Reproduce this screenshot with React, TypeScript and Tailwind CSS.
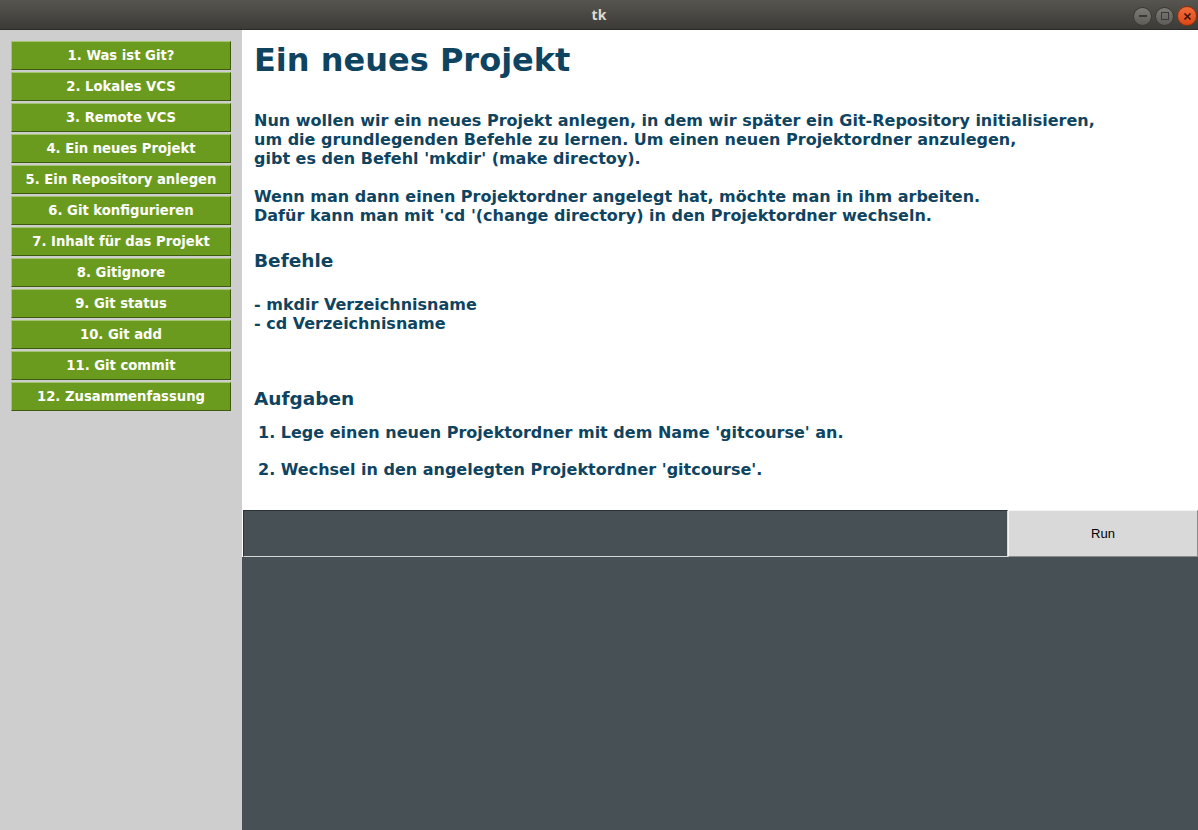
import React from 'react';

const lessons = [
  '1. Was ist Git?',
  '2. Lokales VCS',
  '3. Remote VCS',
  '4. Ein neues Projekt',
  '5. Ein Repository anlegen',
  '6. Git konfigurieren',
  '7. Inhalt für das Projekt',
  '8. Gitignore',
  '9. Git status',
  '10. Git add',
  '11. Git commit',
  '12. Zusammenfassung',
];

const font = { fontFamily: '"DejaVu Sans", Verdana, sans-serif' };

const TitleBar: React.FC = () => (
  <div className="relative h-[30px] flex items-center justify-center bg-gradient-to-b from-[#57554f] to-[#3c3b37] border-b border-[#2b2a27]">
    <span className="text-[14px] font-bold text-[#dfdbd2]" style={{ fontFamily: '"Noto Sans", sans-serif' }}>
      tk
    </span>
    <div className="absolute right-[1px] top-[6px] flex items-center gap-[3px]">
      <div className="w-[19px] h-[19px] rounded-full bg-gradient-to-b from-[#7d7b76] to-[#5e5c57] border border-[#3a3935] flex items-center justify-center">
        <div className="w-[8px] h-[2px] bg-[#3a3935]" />
      </div>
      <div className="w-[19px] h-[19px] rounded-full bg-gradient-to-b from-[#7d7b76] to-[#5e5c57] border border-[#3a3935] flex items-center justify-center">
        <div className="w-[8px] h-[8px] border-[1.5px] border-[#3a3935]" />
      </div>
      <div className="w-[20px] h-[20px] rounded-full bg-gradient-to-b from-[#f26b3a] to-[#dd4814] border border-[#8e2e0c] flex items-center justify-center">
        <svg width="9" height="9" viewBox="0 0 9 9">
          <path d="M1.5 1.5 L7.5 7.5 M7.5 1.5 L1.5 7.5" stroke="#3a1305" strokeWidth="1.6" />
        </svg>
      </div>
    </div>
  </div>
);

const Sidebar: React.FC = () => (
  <div className="w-[242px] shrink-0 bg-[#cecece] pt-[11px] pl-[11px]">
    <div className="flex flex-col gap-[2px] w-[220px]">
      {lessons.map((l) => (
        <button
          key={l}
          className="h-[29px] bg-[#6b9b1e] text-white text-[13.2px] font-bold border border-t-[#a4c46f] border-l-[#a4c46f] border-b-[#3d5a10] border-r-[#3d5a10] flex items-center justify-center"
          style={font}
        >
          {l}
        </button>
      ))}
    </div>
  </div>
);

const Content: React.FC = () => (
  <div className="flex-1 flex flex-col">
    <div className="h-[480px] bg-white px-[12px] text-[#0f4461] font-bold" style={font}>
      <h1 className="text-[32px] leading-[37px] pt-[12px]">Ein neues Projekt</h1>
      <div className="text-[16px] leading-[19px] mt-[32px]">
        <p>Nun wollen wir ein neues Projekt anlegen, in dem wir später ein Git-Repository initialisieren,</p>
        <p>um die grundlegenden Befehle zu lernen. Um einen neuen Projektordner anzulegen,</p>
        <p>gibt es den Befehl 'mkdir' (make directoy).</p>
        <p className="mt-[19px]">Wenn man dann einen Projektordner angelegt hat, möchte man in ihm arbeiten.</p>
        <p>Dafür kann man mit 'cd '(change directory) in den Projektordner wechseln.</p>
      </div>
      <h2 className="text-[18.5px] leading-[23px] mt-[24px]">Befehle</h2>
      <div className="text-[16px] leading-[19px] mt-[23px]">
        <p>- mkdir Verzeichnisname</p>
        <p>- cd Verzeichnisname</p>
      </div>
      <h2 className="text-[18.5px] leading-[23px] mt-[54px]">Aufgaben</h2>
      <div className="text-[16px] leading-[19px] pl-[4px] mt-[13px]">
        <p>1. Lege einen neuen Projektordner mit dem Name 'gitcourse' an.</p>
        <p className="mt-[18px]">2. Wechsel in den angelegten Projektordner 'gitcourse'.</p>
      </div>
    </div>
    <div className="flex h-[47px]">
      <div className="flex-1 bg-[#475054] border border-t-[#2b3134] border-l-[#2b3134] border-b-[#d9d9d9] border-r-[#d9d9d9] ml-[1px]" />
      <button
        className="w-[190px] bg-[#d9d9d9] border border-t-[#f4f4f4] border-l-[#f4f4f4] border-b-[#8a8a8a] border-r-[#8a8a8a] text-[13px] text-black"
        style={{ fontFamily: '"Liberation Sans", Arial, sans-serif' }}
      >
        Run
      </button>
    </div>
    <div className="flex-1 bg-[#475054]" />
  </div>
);

export default function App() {
  return (
    <div className="w-[1198px] h-[830px] flex flex-col overflow-hidden">
      <TitleBar />
      <div className="flex flex-1">
        <Sidebar />
        <Content />
      </div>
    </div>
  );
}
